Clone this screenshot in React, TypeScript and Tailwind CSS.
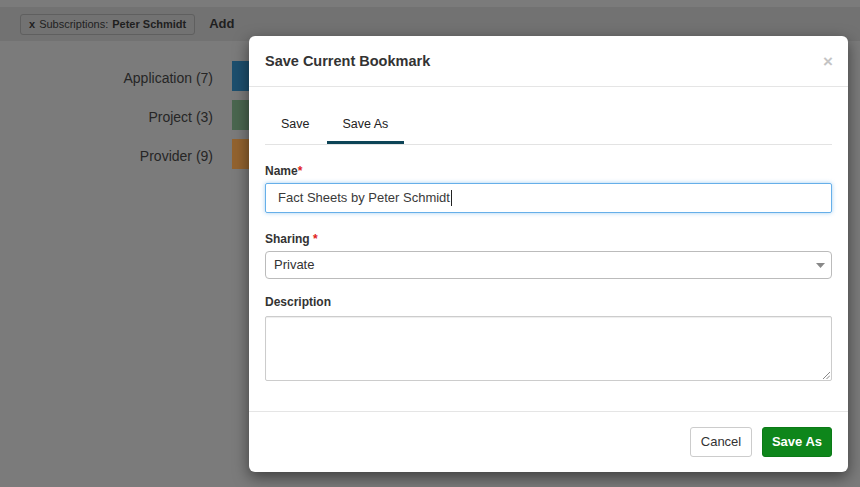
import React from "react";

export default function App() {
  const font = { fontFamily: '"Liberation Sans", Arial, Helvetica, sans-serif' };
  return (
    <div className="relative w-[860px] h-[487px] overflow-hidden bg-[#7b7b7b]" style={font}>
      {/* Background page (dimmed) */}
      <div className="pt-[7px]">
        <div className="h-[34px] bg-[#727272] flex items-center pl-[20px] gap-[14px]">
          <div className="h-[21px] px-[8px] flex items-center gap-[4px] border border-[#5f5f5f] rounded-[3px] text-[11px] text-[#1f1f1f]">
            <span className="font-bold">x</span>
            <span>Subscriptions:</span>
            <span className="font-bold">Peter Schmidt</span>
          </div>
          <span className="text-[13px] font-bold text-[#1f1f1f]">Add</span>
        </div>
        <div className="mt-[20px] flex flex-col gap-[9px]">
          {[
            { label: "Application (7)", color: "bg-[#1d4f6e]" },
            { label: "Project (3)", color: "bg-[#4a664f]" },
            { label: "Provider (9)", color: "bg-[#93632f]" },
          ].map((r) => (
            <div key={r.label} className="flex items-center h-[30px]">
              <div className="w-[213px] text-right text-[14px] text-[#262626] pt-[4px]">{r.label}</div>
              <div className={`ml-[19px] h-[30px] w-[60px] ${r.color}`} />
            </div>
          ))}
        </div>
      </div>

      {/* Modal */}
      <div className="absolute left-[249px] top-[36px] w-[599px] h-[436px] bg-white rounded-[6px] shadow-[0_5px_15px_rgba(0,0,0,0.5)] flex flex-col">
        <div className="h-[51px] border-b border-[#e5e5e5] flex items-center justify-between px-[16px]">
          <h2 className="text-[14.5px] font-bold text-[#333] pt-[2px]">Save Current Bookmark</h2>
          <span className="text-[17px] font-bold text-[#c4c4c4] leading-none mr-[-1px]">×</span>
        </div>
        <div className="px-[16px] pt-[17px] flex-1">
          <div className="flex border-b border-[#e3e3e3] h-[41px]">
            <div className="px-[16px] h-[40px] flex items-center text-[12.5px] text-[#222] mr-[1px]">Save</div>
            <div className="px-[16px] h-[40px] flex items-center text-[12.5px] text-[#222] border-b-[3px] border-[#0d4457] pt-[3px]">Save As</div>
          </div>

          <div className="mt-[19px] h-[15px] text-[12px] font-bold text-[#333] leading-[15px]">
            Name<span className="text-[#e02020]">*</span>
          </div>
          <div className="mt-[4px] h-[30px] border border-[#66afe9] rounded-[2px] shadow-[0_0_4px_rgba(102,175,233,0.6)] flex items-center pl-[12px] text-[13px] text-[#3a3a3a]">
            Fact Sheets by Peter Schmidt<span className="inline-block w-[1px] h-[16px] bg-[#222] ml-[1px]" />
          </div>

          <div className="mt-[19px] h-[15px] text-[12px] font-bold text-[#333] leading-[15px]">
            Sharing <span className="text-[#e02020]">*</span>
          </div>
          <div className="mt-[4px] h-[28px] border border-[#bbb] rounded-[4px] flex items-center justify-between pl-[8px] pr-[6px] text-[13px] text-[#333]">
            <span>Private</span>
            <svg width="9" height="5" viewBox="0 0 9 5"><polygon points="0,0 9,0 4.5,5" fill="#888" /></svg>
          </div>

          <div className="mt-[16px] h-[15px] text-[12px] font-bold text-[#333] leading-[15px]">Description</div>
          <div className="relative mt-[6px] h-[65px] border border-[#ccc] rounded-[2px] shadow-[inset_0_1px_1px_rgba(0,0,0,0.075)]">
            <svg className="absolute right-[1px] bottom-[1px]" width="8" height="8" viewBox="0 0 8 8">
              <line x1="1" y1="8" x2="8" y2="1" stroke="#888" strokeWidth="1" />
              <line x1="4.5" y1="8" x2="8" y2="4.5" stroke="#888" strokeWidth="1" />
            </svg>
          </div>
        </div>
        <div className="h-[61px] border-t border-[#e5e5e5] flex items-center justify-end gap-[10px] px-[16px]">
          <button className="h-[30px] w-[62px] border border-[#ccc] rounded-[3px] bg-white text-[13px] text-[#333]">Cancel</button>
          <button className="h-[30px] w-[70px] rounded-[3px] bg-[#0e861b] border border-[#0b7a17] text-[13px] font-bold text-white">Save As</button>
        </div>
      </div>
    </div>
  );
}
